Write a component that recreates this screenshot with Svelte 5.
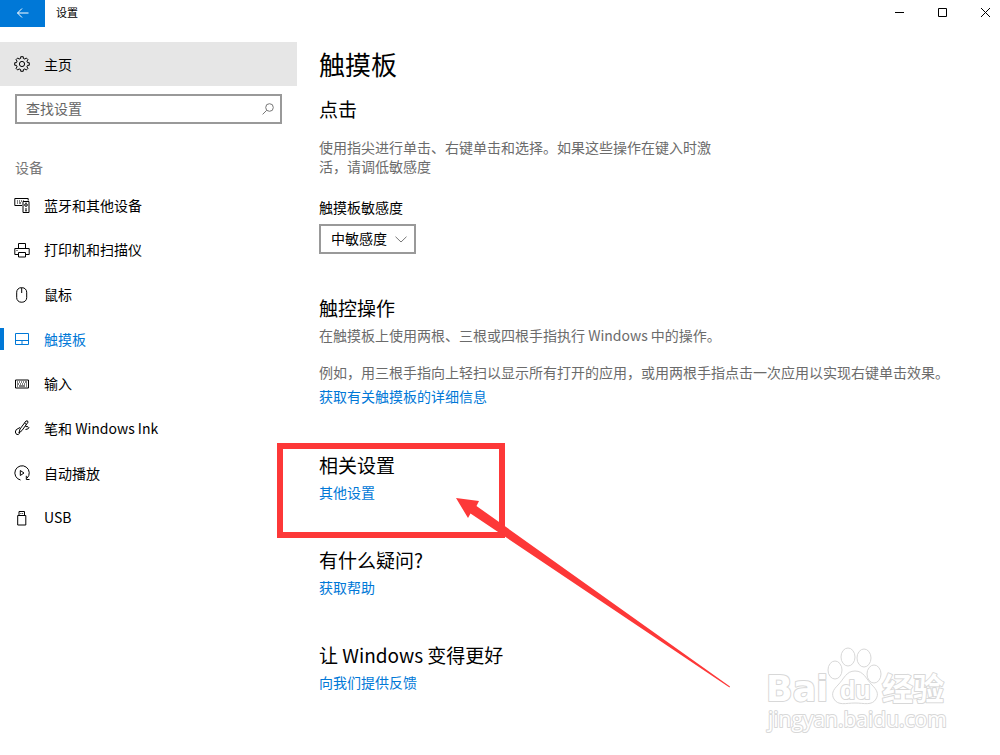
<script lang="ts">
	type Item = { id: string; label: string };

	const items: Item[] = [
		{ id: 'bluetooth', label: '蓝牙和其他设备' },
		{ id: 'printers', label: '打印机和扫描仪' },
		{ id: 'mouse', label: '鼠标' },
		{ id: 'touchpad', label: '触摸板' },
		{ id: 'typing', label: '输入' },
		{ id: 'pen', label: '笔和 Windows Ink' },
		{ id: 'autoplay', label: '自动播放' },
		{ id: 'usb', label: 'USB' }
	];

	const related = [
		{ title: '相关设置', link: '其他设置' },
		{ title: '有什么疑问?', link: '获取帮助' },
		{ title: '让 Windows 变得更好', link: '向我们提供反馈' }
	];

	// outline of the home gear: eight teeth round an 8,8 centre
	const gear = Array.from({ length: 8 }, (_, i) => {
		const point = (deg: number, r: number) => {
			const a = ((deg + i * 45) * Math.PI) / 180;
			return `${(8 + r * Math.cos(a)).toFixed(2)},${(8 + r * Math.sin(a)).toFixed(2)}`;
		};
		return [point(-14, 5.7), point(-10, 7.4), point(10, 7.4), point(14, 5.7)].join(' ');
	}).join(' ');

	let current = $state('touchpad');
	let search = $state('');
	let sensitivity = $state('medium');
</script>

<div class="window">
	<header>
		<button class="back" aria-label="返回">
			<svg width="14" height="12" viewBox="0 0 14 12"><path d="M12.500 6H1.500M6 1.500 1.500 6 6 10.500" /></svg>
		</button>
		<span class="caption">设置</span>
		<div class="controls">
			<button aria-label="最小化"><svg width="11" height="11" viewBox="0 0 11 11"><path d="M1 5.500h9" /></svg></button>
			<button aria-label="最大化"><svg width="11" height="11" viewBox="0 0 11 11"><path d="M1.500 1.500h8v8h-8z" /></svg></button>
			<button aria-label="关闭"><svg width="11" height="11" viewBox="0 0 11 11"><path d="m1 1 9 9M10 1l-9 9" /></svg></button>
		</div>
	</header>

	<div class="body">
		<aside>
			<a class="home" href="#home">
				<svg class="icon" viewBox="0 0 16 16"><polygon points={gear} /><circle cx="8" cy="8" r="2.600" /></svg>
				主页
			</a>

			<div class="search">
				<input type="text" placeholder="查找设置" aria-label="查找设置" bind:value={search} />
				<svg width="12" height="12" viewBox="0 0 12 12"><circle cx="7.500" cy="4.500" r="3.800" /><path d="M4.700 7.300.6 11.400" /></svg>
			</div>

			<p class="group">设备</p>
			<nav>
				{#each items as item}
					<a href={'#' + item.id} class:active={current === item.id} onclick={() => (current = item.id)}>
						<svg class="icon" viewBox="0 0 16 16">
							{#if item.id === 'bluetooth'}
								<path d="M8 8.500H.8v-7h13.400v2" />
								<path d="M3 4h1m1 0h1m1 0h1m1 0h1M3 6h1m1 0h2" />
								<path d="M9 4.500h6v11H9z" />
								<circle cx="12" cy="8" r="1.300" />
								<path d="M11 12h2m-2 1.800h2M12 5.500v1" />
							{:else if item.id === 'printers'}
								<path d="M4.500 7V1.500h7V7M4.500 12.500H.8v-6h14.400v6h-3.700" />
								<path d="M4.500 10.500h7v4.500h-7zM2.500 8.500h1" />
							{:else if item.id === 'mouse'}
								<rect x="2.700" y=".7" width="10" height="14.500" rx="4.500" />
								<path d="M7.700 1v5" />
							{:else if item.id === 'touchpad'}
								<path d="M1.500 2.500h13v11h-13zM1.500 9.500h13M8 9.500v4" />
							{:else if item.id === 'typing'}
								<path d="M1.500 4h13v8h-13z" />
								<path d="M3 6h1m1 0h1m1 0h1m1 0h1m1 0h2M3 8h2m1 0h1m1 0h1m1 0h1m1 0h1M3 10h1m1 0h6m1 0h1" />
							{:else if item.id === 'pen'}
								<path d="m5 13 1-4 6-8q2-.8 2 1.200l-6 8.300zM10.500 3l2 1.600" />
								<path d="M6 7.500Q.8 9.500 1.300 12q.7 3.200 3 2.600 1.500-.8.7-2.100M11.500 6.500q3.200-.2 3.500 1.300-.4 1.300-3.500 1.700" />
							{:else if item.id === 'autoplay'}
								<path d="M6.500 15A7.200 7.200 0 1 1 13 13.200" />
								<path d="M6.300 5.500v5L10 8zM12.300 10.800v3.700h3.200" />
							{:else}
								<path d="M3.700 5.500h8.100V15H3.700zM5 5.500v-4h5.500v4M6.500 3.500h.8m1 0h.8" />
							{/if}
						</svg>
						{item.label}
					</a>
				{/each}
			</nav>
		</aside>

		<main>
			<h1>触摸板</h1>

			<h2 class="first">点击</h2>
			<p class="narrow">使用指尖进行单击、右键单击和选择。如果这些操作在键入时激活，请调低敏感度</p>
			<label for="sensitivity">触摸板敏感度</label>
			<div class="select">
				<select id="sensitivity" bind:value={sensitivity}>
					<option value="low">低敏感度</option>
					<option value="medium">中敏感度</option>
					<option value="high">高敏感度</option>
				</select>
				<svg width="12" height="7" viewBox="0 0 12 7"><path d="m.5.7 5.500 5.300L11.500.7" /></svg>
			</div>

			<h2 class="gestures">触控操作</h2>
			<p>在触摸板上使用两根、三根或四根手指执行 Windows 中的操作。</p>
			<p class="example">例如，用三根手指向上轻扫以显示所有打开的应用，或用两根手指点击一次应用以实现右键单击效果。</p>
			<a href="#details">获取有关触摸板的详细信息</a>

			<div class="related">
				{#each related as section}
					<section>
						<h2>{section.title}</h2>
						<a href="#related">{section.link}</a>
					</section>
				{/each}
			</div>
		</main>
	</div>

	<svg class="marker" width="460" height="250" viewBox="0 0 460 250" aria-hidden="true">
		<rect x="3" y="3" width="222" height="89" />
		<polygon points="179,55 202,58 199.500,63 453,243.500 452.500,244.500 193.500,70.500 191,75" />
	</svg>

	<svg class="watermark" width="186" height="90" viewBox="0 0 186 90">
		<text class="brand" x="2" y="56">Bai</text>
		<ellipse cx="71" cy="25" rx="7" ry="9" />
		<ellipse cx="84" cy="12" rx="7" ry="9" />
		<ellipse cx="100" cy="13" rx="7" ry="9" />
		<ellipse cx="110" cy="29" rx="7" ry="9" />
		<path d="M91 26c9 0 11 8 17 14 5 5 7 9 4 14-4 7-12 4-21 4s-17 3-21-4c-3-5-1-9 4-14 6-6 8-14 17-14z" />
		<text class="du" x="76" y="54">du</text>
		<text class="cjk" x="118" y="55">经验</text>
		<text class="url" x="4" y="82">jingyan.baidu.com</text>
	</svg>
</div>

<style>
	:global(body) {
		margin: 0;
		background: #fff;
	}
	.window {
		position: relative;
		min-height: 100vh;
		color: #000;
		font-family: 'Noto Sans CJK SC', sans-serif;
		font-size: 14px;
		line-height: 19px;
	}
	svg {
		fill: none;
		stroke: currentColor;
		stroke-width: 1;
	}
	button {
		display: flex;
		align-items: center;
		justify-content: center;
		padding: 0;
		border: none;
		background: none;
		color: inherit;
	}
	header {
		display: flex;
		align-items: flex-start;
		height: 42px;
	}
	.back {
		width: 45px;
		height: 27px;
		padding-bottom: 2px;
		background: #0078d7;
		color: #fff;
	}
	.caption {
		margin-left: 11px;
		font-size: 11px;
		line-height: 24px;
	}
	.controls {
		display: flex;
		gap: 13px;
		margin-left: auto;
	}
	.controls button {
		width: 30px;
		height: 25px;
	}
	.body {
		display: flex;
		align-items: flex-start;
	}
	aside {
		flex: 0 0 297px;
	}
	.icon {
		flex: none;
		width: 16px;
		height: 16px;
	}
	.home,
	nav a {
		display: flex;
		align-items: center;
		gap: 14px;
		padding-left: 14px;
		color: #000;
	}
	.home {
		height: 44px;
		background: #e6e6e6;
	}
	.search {
		display: grid;
		align-items: center;
		margin: 8px 15px 0;
	}
	.search > *,
	.select > * {
		grid-area: 1 / 1;
	}
	.search input {
		box-sizing: border-box;
		width: 100%;
		height: 30px;
		padding: 0 30px 3px 9px;
		border: 2px solid #999;
		border-radius: 0;
		font: inherit;
	}
	.search input::placeholder {
		color: #666;
		opacity: 1;
	}
	.search svg {
		justify-self: end;
		margin-right: 8px;
		color: #777;
	}
	.group {
		margin: 34px 15px 6px;
		color: #777;
	}
	nav {
		display: grid;
		grid-auto-rows: 1fr;
		height: 357px;
	}
	nav a.active {
		color: #0078d7;
		background: linear-gradient(#0078d7, #0078d7) left center / 4px 22px no-repeat;
	}
	main {
		flex: 1;
		padding: 5px 22px 40px;
	}
	h1,
	h2 {
		margin: 0;
		font-weight: 400;
	}
	h1 {
		font-size: 26px;
		line-height: 34px;
	}
	h2 {
		font-size: 19px;
		line-height: 26px;
	}
	h2.first {
		margin-top: 15px;
	}
	h2.gestures {
		margin: 41px 0 5px;
	}
	main p {
		margin: 0;
		color: #6b6b6b;
	}
	main p.narrow {
		max-width: 400px;
		margin: 16px 0 22px;
	}
	main p.example {
		margin: 18px 0 5px;
	}
	label {
		display: block;
	}
	a {
		color: #0078d7;
		text-decoration: none;
	}
	main a {
		display: block;
		width: fit-content;
	}
	.select {
		display: inline-grid;
		align-items: center;
		margin-top: 7px;
		vertical-align: top;
	}
	select {
		width: 97px;
		height: 30px;
		padding: 0 24px 2px 10px;
		border: 2px solid #999;
		border-radius: 0;
		background: #fff;
		color: #000;
		font: inherit;
		appearance: none;
	}
	.select svg {
		justify-self: end;
		margin-right: 9px;
		color: #777;
		pointer-events: none;
	}
	.related {
		display: grid;
		gap: 45px;
		margin-top: 46px;
	}
	section h2 {
		margin-bottom: 5px;
	}
	.marker {
		position: absolute;
		top: 443px;
		left: 277px;
		pointer-events: none;
	}
	.marker rect {
		stroke: #fd3838;
		stroke-width: 6;
	}
	.marker polygon {
		fill: #fd3838;
		stroke: none;
	}
	.watermark {
		position: absolute;
		right: 50px;
		bottom: 20px;
		fill: #fff;
		stroke: #d8d8d8;
		pointer-events: none;
	}
	.watermark text {
		paint-order: stroke;
		stroke-width: 2;
		stroke-linejoin: round;
	}
	.brand {
		font-family: 'DejaVu Sans', sans-serif;
		font-size: 35px;
		font-weight: 700;
	}
	.du {
		font-family: 'Liberation Sans', sans-serif;
		font-size: 25px;
		font-weight: 700;
	}
	.cjk {
		font-family: 'Noto Sans CJK SC', sans-serif;
		font-size: 31px;
		font-weight: 700;
	}
	.url {
		font-family: 'Open Sans', sans-serif;
		font-size: 21px;
	}
</style>
